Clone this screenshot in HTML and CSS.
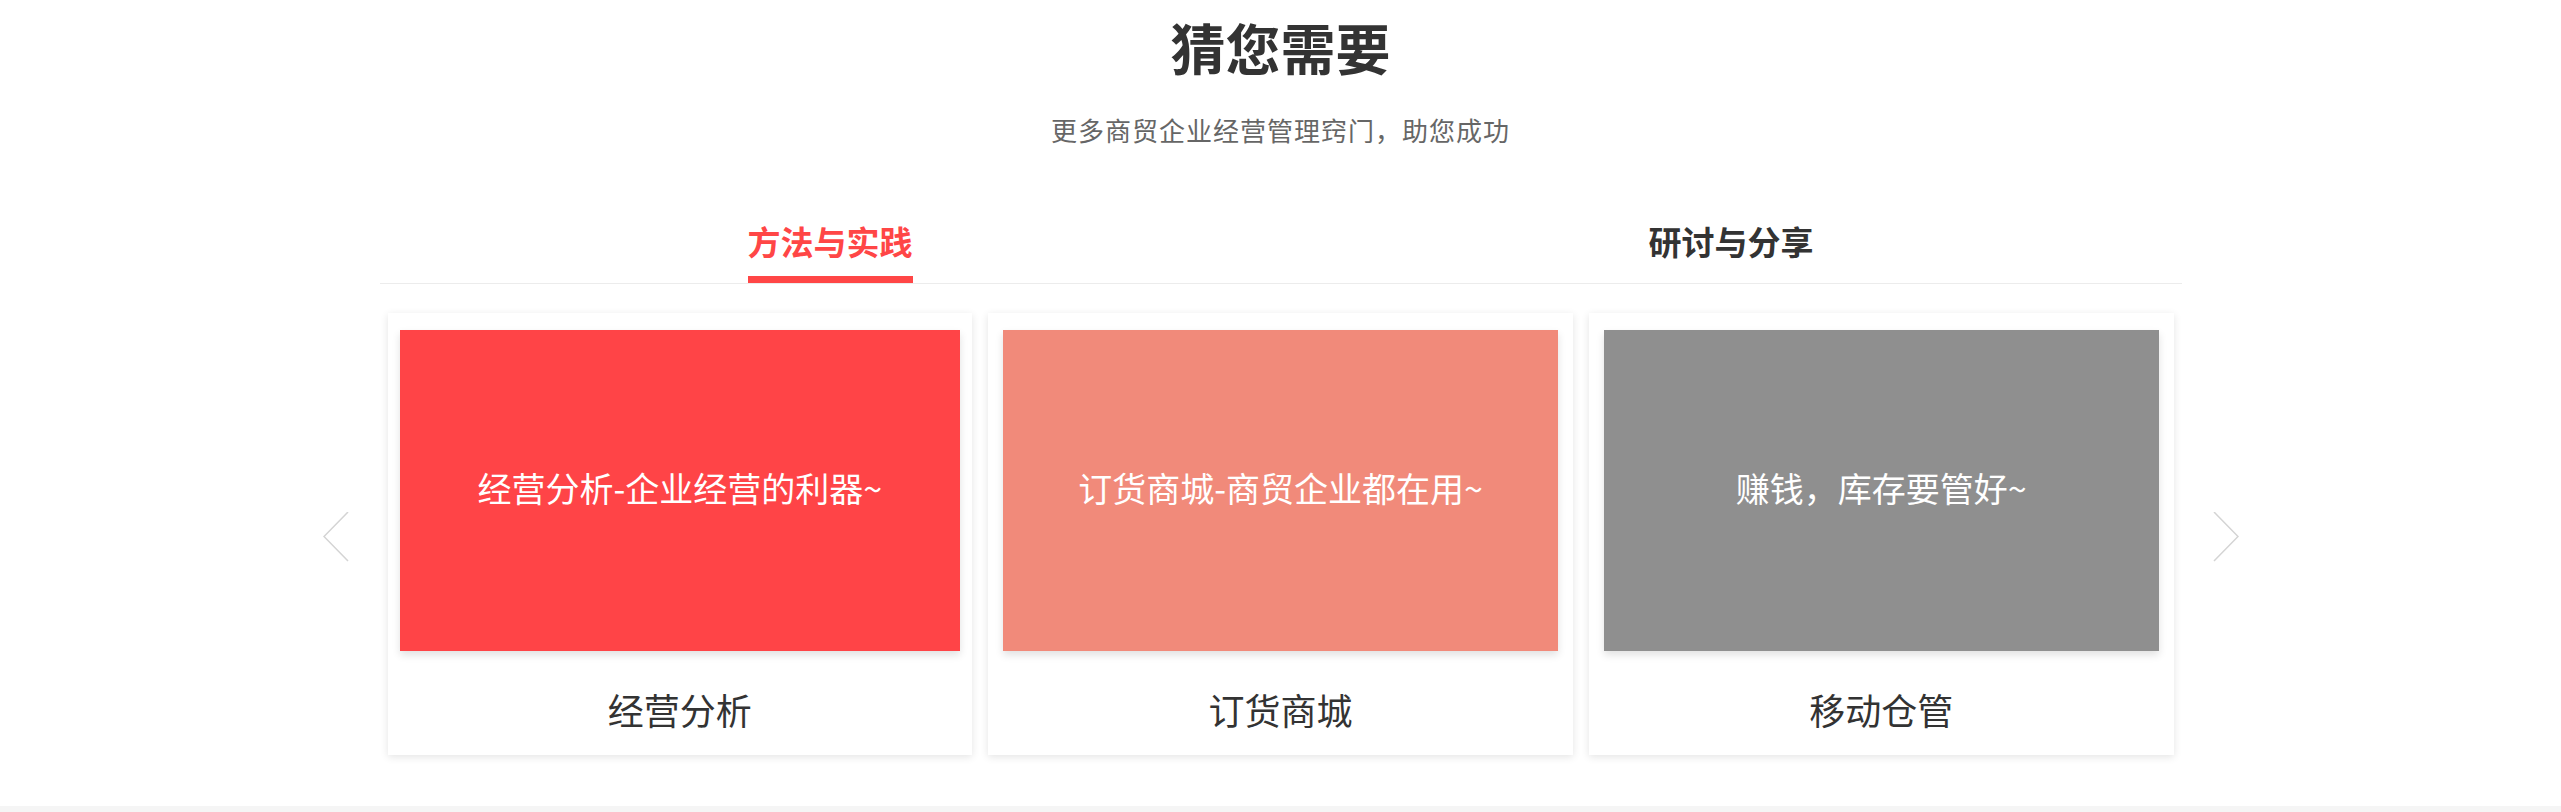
FILE: index.html
```html
<!DOCTYPE html>
<html lang="zh-CN">
<head>
<meta charset="utf-8">
<title>猜您需要</title>
<link rel="stylesheet" href="styles.css">
</head>
<body>
<section class="guess">
  <h2 class="guess-title">猜您需要</h2>
  <p class="guess-sub">更多商贸企业经营管理窍门，助您成功</p>
  <div class="tabs">
    <div class="tab"><span class="tab-label active">方法与实践</span></div>
    <div class="tab"><span class="tab-label">研讨与分享</span></div>
  </div>
  <div class="carousel">
    <svg class="arrow" viewBox="0 0 26 50" width="26" height="50"><polyline points="25,0 1,24.5 25,49" fill="none" stroke="#d4d4d4" stroke-width="1.5"/></svg>
    <div class="track">
      <div class="card">
        <div class="card-img red">经营分析-企业经营的利器~</div>
        <div class="card-name">经营分析</div>
      </div>
      <div class="card card-inset">
        <div class="card-img salmon">订货商城-商贸企业都在用~</div>
        <div class="card-name">订货商城</div>
      </div>
      <div class="card card-inset">
        <div class="card-img grey">赚钱，库存要管好~</div>
        <div class="card-name">移动仓管</div>
      </div>
    </div>
    <svg class="arrow" viewBox="0 0 26 50" width="26" height="50"><polyline points="1,0 25,24.5 1,49" fill="none" stroke="#d4d4d4" stroke-width="1.5"/></svg>
  </div>
</section>
<footer class="foot"></footer>
</body>
</html>
```
FILE: styles.css
```css
html, body {
  margin: 0;
  padding: 0;
  background: #ffffff;
  font-family: "Noto Sans CJK SC", "Noto Sans", sans-serif;
}
.guess {
  padding-top: 16px;
  padding-bottom: 51px;
  display: flex;
  flex-direction: column;
  align-items: center;
}
.guess-title {
  margin: 0;
  font-size: 55px;
  line-height: 60px;
  font-weight: 700;
  color: #333333;
}
.guess-sub {
  margin: 39px 0 0;
  font-size: 26px;
  line-height: 30px;
  letter-spacing: 1px;
  color: #666666;
}
.tabs {
  margin-top: 76px;
  width: 1802px;
  display: flex;
  border-bottom: 1px solid #ececec;
}
.tab {
  flex: 1;
  display: flex;
  justify-content: center;
}
.tab-label {
  font-size: 33px;
  line-height: 40px;
  font-weight: 700;
  color: #333333;
  padding-bottom: 15px;
  border-bottom: 7px solid transparent;
}
.tab-label.active {
  color: #ff4646;
  border-bottom-color: #ff4646;
}
.carousel {
  margin-top: 29px;
  display: flex;
  align-items: center;
  gap: 31px;
}
.arrow {
  display: block;
  flex: none;
  margin-top: 6px;
}
.track {
  width: 1802px;
  box-sizing: border-box;
  padding: 0 8px;
  display: grid;
  grid-template-columns: repeat(3, minmax(0, 1fr));
  gap: 16px;
}
.card {
  background: #ffffff;
  padding: 17px 12px 28px;
  box-shadow: 0 2px 8px rgba(0, 0, 0, 0.11);
  display: flex;
  flex-direction: column;
}
.card-inset {
  padding-left: 15px;
  padding-right: 15px;
}
.card-img {
  height: 321px;
  box-sizing: border-box;
  padding-bottom: 6px;
  display: flex;
  align-items: center;
  justify-content: center;
  color: #ffffff;
  font-size: 34px;
  box-shadow: 0 4px 8px rgba(0, 0, 0, 0.12);
}
.card-img.red { background: #ff4447; }
.card-img.salmon { background: #f18a7a; }
.card-img.grey { background: #8f8f8f; }
.card-name {
  margin-top: 40px;
  text-align: center;
  font-size: 36px;
  line-height: 36px;
  color: #333333;
}
.foot {
  height: 100px;
  background: #f5f5f5;
}
```
